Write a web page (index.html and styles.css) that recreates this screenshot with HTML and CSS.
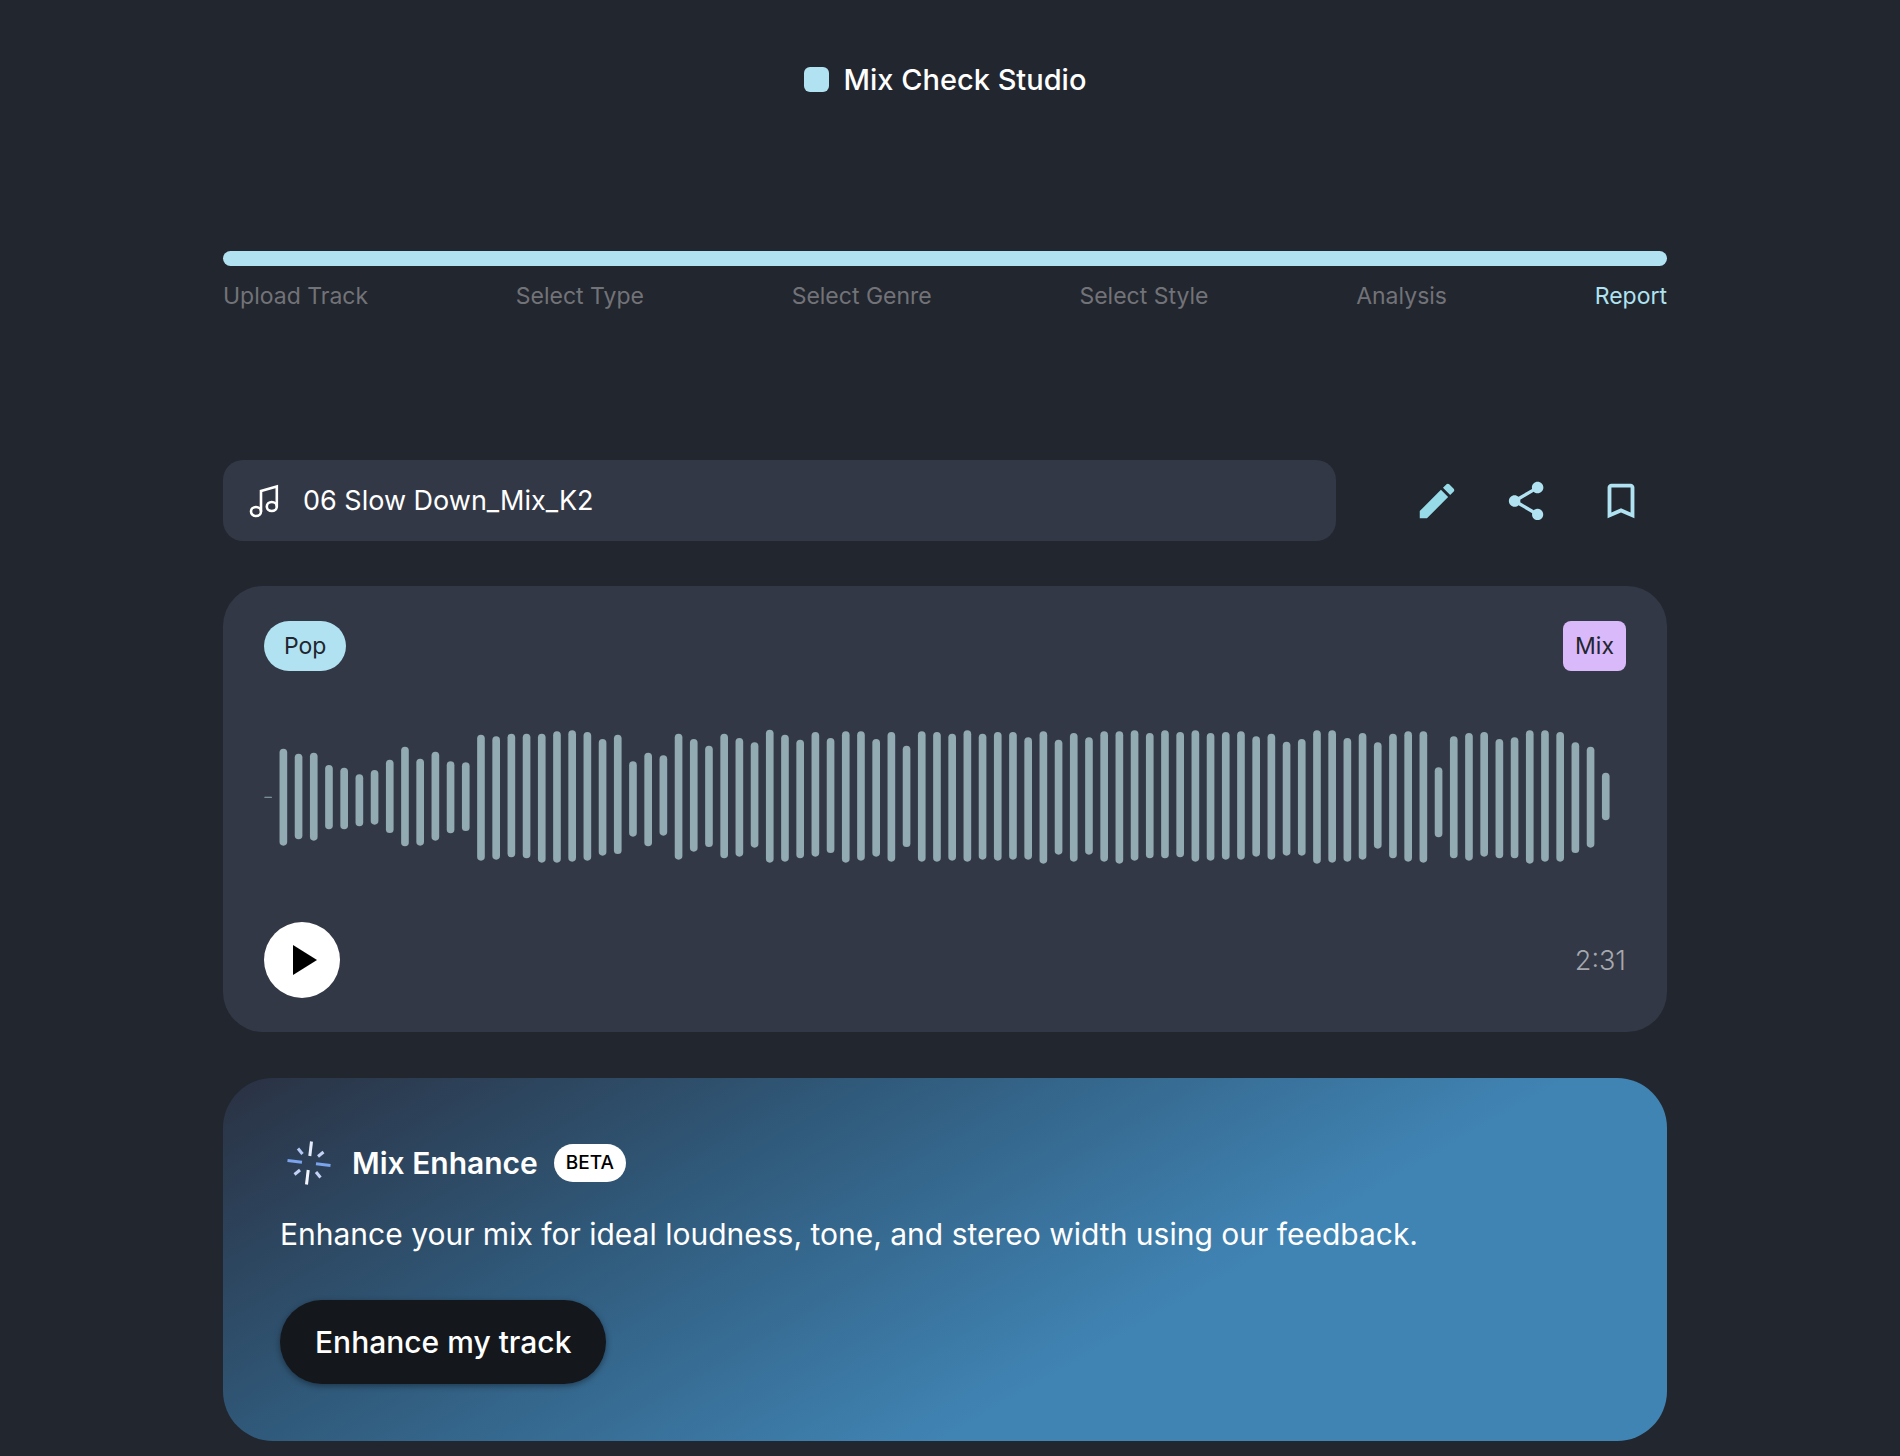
FILE: index.html
```html
<!DOCTYPE html>
<html lang="en">
<head>
    <meta charset="UTF-8">
    <meta name="viewport" content="width=device-width, initial-scale=1.0">
    <title>Mix Check Studio</title>
    <link rel="stylesheet" href="styles.css">
</head>
<body>
    <div class="container">
        <header class="header">
            <span class="logo"></span>
            <h1>Mix Check Studio</h1>
        </header>

        <nav class="progress" aria-label="Progress">
            <div class="progress-bar"></div>
            <ol class="steps">
                <li>Upload Track</li>
                <li>Select Type</li>
                <li>Select Genre</li>
                <li>Select Style</li>
                <li>Analysis</li>
                <li class="active" aria-current="step">Report</li>
            </ol>
        </nav>

        <div class="track-row">
            <div class="track-name">
                <svg class="note-icon" viewBox="0 0 32 36" aria-hidden="true">
                    <g fill="none" stroke="#fff" stroke-width="2.600">
                        <ellipse cx="7" cy="28.500" rx="5" ry="4.500"/>
                        <ellipse cx="22.800" cy="23.500" rx="5" ry="4.500"/>
                        <path d="M12 28.500V8L27.800 3.500V23.500"/>
                    </g>
                </svg>
                <span>06 Slow Down_Mix_K2</span>
            </div>
            <div class="actions">
                <button class="icon-btn" aria-label="Rename">
                    <svg viewBox="0 0 24 24" fill="#98dbe8"><path d="M3 17.250V21h3.750L17.810 9.940l-3.750-3.750L3 17.250zM20.710 7.040c.39-.39.39-1.020 0-1.410l-2.340-2.340c-.39-.39-1.020-.39-1.410 0l-1.830 1.830 3.750 3.750 1.830-1.830z"/></svg>
                </button>
                <button class="icon-btn" aria-label="Share">
                    <svg viewBox="1.500 0 24 24" fill="#b0e2f1"><path d="M18 16.080c-.76 0-1.440.3-1.960.77L8.910 12.700c.05-.23.09-.46.09-.7s-.04-.47-.09-.7l7.050-4.110c.54.5 1.250.81 2.040.81 1.660 0 3-1.340 3-3s-1.340-3-3-3-3 1.340-3 3c0 .24.04.47.09.7L8.040 9.810C7.500 9.310 6.790 9 6 9c-1.660 0-3 1.340-3 3s1.340 3 3 3c.79 0 1.500-.31 2.040-.81l7.120 4.160c-.05.21-.08.43-.08.65 0 1.610 1.310 2.920 2.920 2.920s2.920-1.310 2.920-2.920-1.310-2.920-2.920-2.920z"/></svg>
                </button>
                <button class="icon-btn" aria-label="Save">
                    <svg viewBox="0 0 24 24" fill="#b0e2f1"><path d="M17 3H7c-1.100 0-2 .9-2 2v16l7-3 7 3V5c0-1.100-.9-2-2-2zm0 15l-5-2.180L7 18V5h10v13z"/></svg>
                </button>
            </div>
        </div>

        <section class="player">
            <div class="tags">
                <span class="tag genre">Pop</span>
                <span class="tag type">Mix</span>
            </div>
            <svg class="waveform" id="waveform" viewBox="0 0 4086 420" role="img" aria-label="Waveform"></svg>
            <div class="controls">
                <button class="play-btn" aria-label="Play">
                    <svg viewBox="0 0 24 30"><path d="M0 0L24 15L0 30Z"/></svg>
                </button>
                <span class="time">2:31</span>
            </div>
        </section>

        <section class="enhance">
            <div class="enhance-title">
                <svg class="spark-icon" viewBox="0 0 44 44" aria-hidden="true">
                    <g fill="none" stroke-width="3">
                        <path stroke="#e6ecfb" d="M24.500 0.500L22.800 15"/>
                        <path stroke="#f4f6fd" d="M19.500 43.500L21.200 29"/>
                        <path stroke="#7ba3ee" d="M0.500 19.500L15 21.200"/>
                        <path stroke="#7ba3ee" d="M43.500 24.500L29 22.800"/>
                        <path stroke="#b5c8f4" d="M11 7.500L15.500 13"/>
                        <path stroke="#c3d2f6" d="M36.500 11L31 15.500"/>
                        <path stroke="#c3d2f6" d="M33.500 36.500L29 31"/>
                        <path stroke="#c3d2f6" d="M7.500 33.500L13 29"/>
                    </g>
                </svg>
                <h2>Mix Enhance</h2>
                <span class="beta">BETA</span>
            </div>
            <p>Enhance your mix for ideal loudness, tone, and stereo width using our feedback.</p>
            <button class="enhance-btn">Enhance my track</button>
        </section>
    </div>

    <script src="script.js"></script>
</body>
</html>
```
FILE: styles.css
```css
* {
    box-sizing: border-box;
}

body {
    margin: 0;
    padding: 0 10px 16px 0;
    background-color: #22262f;
    color: #fff;
    font-family: Inter, sans-serif;
}

.container {
    width: 76vw;
    margin: 0 auto;
}

button {
    font-family: inherit;
    border: none;
    cursor: pointer;
}

.header {
    display: flex;
    align-items: center;
    justify-content: center;
    gap: 15px;
    padding-top: 59px;
}

.logo {
    width: 25px;
    height: 25px;
    border-radius: 6px;
    background-color: #b0e2f1;
}

.header h1 {
    margin: 0;
    font-size: 29px;
    line-height: 41px;
    font-weight: 500;
}

.progress {
    margin-top: 151px;
}

.progress-bar {
    height: 15px;
    border-radius: 8px;
    background-color: #b0e2f1;
}

.steps {
    display: flex;
    justify-content: space-between;
    margin: 15px 0 0;
    padding: 0;
    list-style: none;
    font-size: 23px;
    line-height: 30px;
    color: #727378;
}

.steps .active {
    color: #b0e2f1;
}

.track-row {
    display: flex;
    align-items: center;
    margin-top: 149px;
}

.track-name {
    flex: 1;
    display: flex;
    align-items: center;
    gap: 22px;
    height: 81px;
    padding: 0 26px;
    border-radius: 20px;
    background-color: #333846;
    font-size: 27px;
}

.note-icon {
    width: 32px;
    height: 36px;
}

.actions {
    display: flex;
    gap: 46px;
    padding: 0 23px 0 78px;
}

.icon-btn {
    padding: 0;
    background: none;
}

.icon-btn svg {
    display: block;
    width: 46px;
    height: 46px;
}

.player {
    margin-top: 45px;
    padding: 35px 41px 34px;
    border-radius: 40px;
    background-color: #333846;
}

.tags,
.controls {
    display: flex;
    align-items: center;
    justify-content: space-between;
}

.tag {
    height: 50px;
    font-size: 23px;
    line-height: 50px;
    color: #22262f;
}

.genre {
    padding: 0 20px;
    border-radius: 25px;
    background-color: #b0e2f1;
}

.type {
    padding: 0 12px;
    border-radius: 8px;
    background-color: #dab9fa;
}

.waveform {
    display: block;
    width: 100%;
    margin: 56px 0 55px;
    fill: #92aab2;
}

.play-btn {
    display: flex;
    align-items: center;
    justify-content: center;
    width: 76px;
    height: 76px;
    padding: 0 0 0 5px;
    border-radius: 50%;
    background-color: #fff;
}

.play-btn svg {
    width: 24px;
    height: 30px;
}

.time {
    font-size: 27px;
    font-weight: 300;
    color: #a6a8af;
}

.enhance {
    margin-top: 46px;
    padding: 57px;
    border-radius: 50px;
    background: linear-gradient(150deg, #2a3142 0%, #305a7b 32%, #4084b4 65%);
}

.enhance-title {
    display: flex;
    align-items: center;
    padding-left: 7px;
}

.spark-icon {
    width: 44px;
    height: 44px;
}

.enhance-title h2 {
    margin: 0 16px 0 21px;
    font-size: 30px;
    line-height: 56px;
    font-weight: 600;
}

.beta {
    padding: 0 12px;
    border-radius: 19px;
    background-color: #fff;
    color: #000;
    font-size: 19px;
    line-height: 38px;
    font-weight: 500;
}

.enhance p {
    margin: 23px 0 46px;
    font-size: 30px;
    line-height: 40px;
}

.enhance-btn {
    height: 84px;
    padding: 0 35px;
    border-radius: 42px;
    background-color: #14171c;
    color: #fff;
    font-size: 30px;
    font-weight: 500;
    box-shadow: 0 2px 6px rgba(0, 0, 0, 0.4);
}
```
FILE: script.js
```js
// [above, below] the centre line, one pair per bar
const peaks = [
    [1, 2], [145, 146], [130, 127], [133, 131], [96, 97], [88, 97], [68, 88], [81, 83],
    [112, 108], [151, 148], [115, 146], [136, 131], [107, 109], [104, 102], [187, 191], [182, 188],
    [190, 181], [190, 184], [190, 197], [197, 197], [200, 194], [195, 191], [174, 176], [187, 171],
    [107, 119], [133, 148], [125, 116], [190, 188], [174, 164], [154, 150], [190, 184], [177, 179],
    [164, 152], [202, 197], [187, 194], [172, 184], [195, 179], [177, 168], [197, 197], [197, 191],
    [174, 179], [195, 194], [154, 150], [197, 194], [195, 194], [190, 191], [200, 194], [190, 188],
    [195, 191], [195, 188], [179, 188], [197, 200], [172, 173], [192, 194], [179, 173], [197, 194],
    [197, 200], [200, 191], [192, 184], [200, 184], [195, 181], [200, 194], [192, 191], [195, 188],
    [197, 188], [182, 179], [190, 188], [166, 176], [174, 176], [200, 200], [200, 197], [177, 194],
    [192, 188], [164, 155], [190, 184], [197, 194], [197, 197], [89, 121], [182, 184], [192, 191],
    [195, 179], [174, 184], [179, 184], [200, 200], [200, 194], [195, 194], [164, 168], [151, 152],
    [73, 70]
];

const waveform = document.getElementById('waveform');
const barWidth = 23;
const step = 45.6;
const middle = 210;

peaks.forEach(([up, down], i) => {
    const bar = document.createElementNS('http://www.w3.org/2000/svg', 'rect');
    bar.setAttribute('x', i * step + 1);
    bar.setAttribute('y', middle - up);
    bar.setAttribute('width', barWidth);
    bar.setAttribute('height', up + down);
    bar.setAttribute('rx', Math.min(barWidth, up + down) / 2);
    waveform.appendChild(bar);
});
```
